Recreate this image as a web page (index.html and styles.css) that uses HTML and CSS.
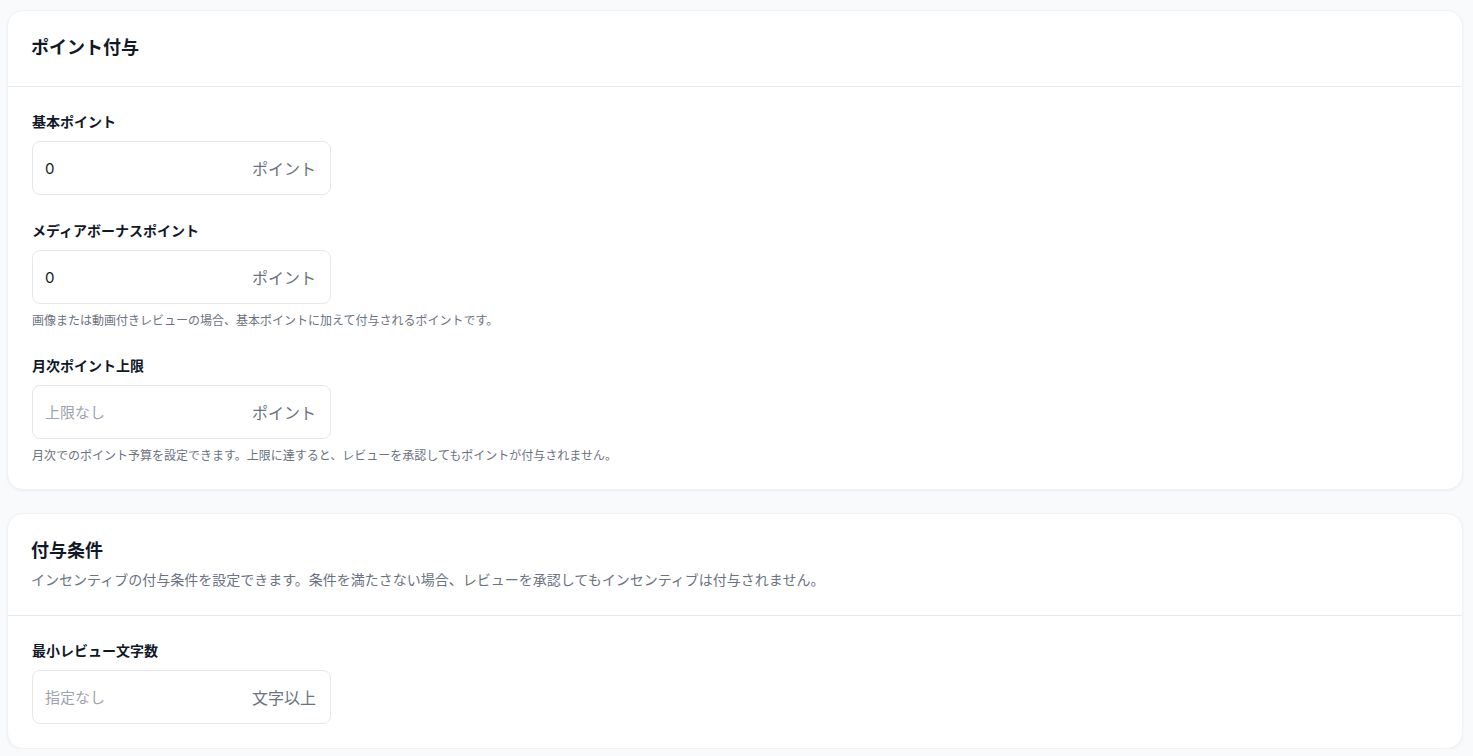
FILE: index.html
```html
<!DOCTYPE html>
<html lang="ja">
<head>
    <meta charset="UTF-8">
    <meta name="viewport" content="width=device-width, initial-scale=1.0">
    <title>インセンティブ設定</title>
    <link rel="stylesheet" href="styles.css">
</head>
<body>

<div class="page">

    <section class="card">
        <div class="card-header">
            <h2>ポイント付与</h2>
        </div>
        <div class="card-body">
            <div class="field">
                <label for="base-point">基本ポイント</label>
                <div class="input-wrap">
                    <input type="text" id="base-point" value="0">
                    <span class="suffix">ポイント</span>
                </div>
            </div>

            <div class="field">
                <label for="media-point">メディアボーナスポイント</label>
                <div class="input-wrap">
                    <input type="text" id="media-point" value="0">
                    <span class="suffix">ポイント</span>
                </div>
                <p class="help">画像または動画付きレビューの場合、基本ポイントに加えて付与されるポイントです。</p>
            </div>

            <div class="field">
                <label for="monthly-limit">月次ポイント上限</label>
                <div class="input-wrap">
                    <input type="text" id="monthly-limit" placeholder="上限なし">
                    <span class="suffix">ポイント</span>
                </div>
                <p class="help">月次でのポイント予算を設定できます。上限に達すると、レビューを承認してもポイントが付与されません。</p>
            </div>
        </div>
    </section>

    <section class="card">
        <div class="card-header">
            <h2>付与条件</h2>
            <p class="subtitle">インセンティブの付与条件を設定できます。条件を満たさない場合、レビューを承認してもインセンティブは付与されません。</p>
        </div>
        <div class="card-body">
            <div class="field">
                <label for="min-length">最小レビュー文字数</label>
                <div class="input-wrap">
                    <input type="text" id="min-length" placeholder="指定なし">
                    <span class="suffix">文字以上</span>
                </div>
            </div>
        </div>
    </section>

</div>

</body>
</html>
```

FILE: styles.css
```css
* { box-sizing: border-box; }
body { margin: 0; background: #f9fafb; font-family: Inter, "Noto Sans CJK JP", sans-serif; color: #111827; }
.page { display: flex; flex-direction: column; gap: 23px; padding: 10px 10px 0 7px; }

.card { background: #fff; border: 1px solid #f1f2f4; border-radius: 16px; box-shadow: 0 1px 3px rgba(0,0,0,0.05); }
.card-header { padding: 24px 24px 25px 23px; border-bottom: 1px solid #e8e9ec; }
.card-header h2 { margin: 0; font-size: 18px; line-height: 26px; font-weight: 700; }
.subtitle { margin: 6px 0 0; font-size: 14px; line-height: 20px; color: #6b7280; }
.card-body { display: flex; flex-direction: column; gap: 26px; padding: 25px 24px 24px 24px; }

.field label { display: block; margin-bottom: 9px; font-size: 14px; line-height: 20px; font-weight: 700; }
.input-wrap { display: flex; align-items: center; width: 299px; height: 54px; padding: 0 14px 0 12px; border: 1px solid #e5e7eb; border-radius: 8px; }
.input-wrap input { flex: 1; min-width: 0; border: none; outline: none; padding: 1px 0 0; font-family: inherit; font-size: 15px; color: #111827; background: transparent; }
.input-wrap input::placeholder { color: #9ca3af; }
.suffix { font-size: 16px; color: #6b7280; }
.help { margin: 8px 0 0; font-size: 12px; line-height: 18px; color: #6b7280; }
```
